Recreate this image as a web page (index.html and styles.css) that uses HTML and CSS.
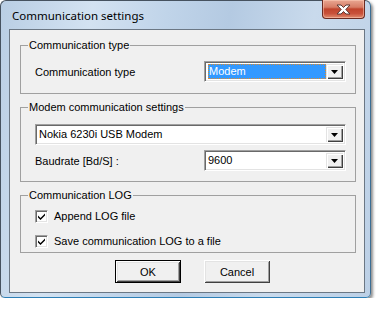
FILE: index.html
```html
<!DOCTYPE html>
<html lang="en">
<head>
  <meta charset="UTF-8" />
  <title>Communication settings</title>
  <link rel="stylesheet" href="styles.css">
</head>
<body>
  <div class="window">
    <div class="titlebar">
      <span class="title">Communication settings</span>
      <button class="close-btn" aria-label="Close">
        <svg width="15" height="11" viewBox="0 0 15 11">
          <path d="M1 1h4l2.5 2.5L10 1h4L9.8 5.5 14 10h-4L7.5 7.5 5 10H1l4.2-4.5z" fill="#fff" stroke="#5a3a36" stroke-width="1" stroke-linejoin="round"/>
        </svg>
      </button>
    </div>

    <div class="client">
      <div class="group group-type">
        <span class="legend">Communication type</span>
        <div class="row">
          <span class="label">Communication type</span>
          <div class="combo combo-short">
            <div class="combo-text"><span class="selected">Modem</span></div>
            <span class="combo-btn"><svg width="7" height="4" viewBox="0 0 7 4"><path d="M0 0h7L3.5 4z" fill="#000"/></svg></span>
          </div>
        </div>
      </div>

      <div class="group group-modem">
        <span class="legend">Modem communication settings</span>
        <div class="combo combo-wide">
          <div class="combo-text">Nokia 6230i USB Modem</div>
          <span class="combo-btn"><svg width="7" height="4" viewBox="0 0 7 4"><path d="M0 0h7L3.5 4z" fill="#000"/></svg></span>
        </div>
        <div class="row">
          <span class="label">Baudrate [Bd/S] :</span>
          <div class="combo combo-short">
            <div class="combo-text">9600</div>
            <span class="combo-btn"><svg width="7" height="4" viewBox="0 0 7 4"><path d="M0 0h7L3.5 4z" fill="#000"/></svg></span>
          </div>
        </div>
      </div>

      <div class="group group-log">
        <span class="legend">Communication LOG</span>
        <label class="check">
          <span class="check-box"><svg width="7" height="7" viewBox="0 0 7 7"><path d="M0 2.5l2.5 2.5L7 0.5v2L2.5 7 0 4.5z" fill="#000"/></svg></span>
          Append LOG file
        </label>
        <label class="check">
          <span class="check-box"><svg width="7" height="7" viewBox="0 0 7 7"><path d="M0 2.5l2.5 2.5L7 0.5v2L2.5 7 0 4.5z" fill="#000"/></svg></span>
          Save communication LOG to a file
        </label>
      </div>

      <div class="buttons">
        <button class="btn btn-default">OK</button>
        <button class="btn">Cancel</button>
      </div>
    </div>
  </div>
</body>
</html>
```

FILE: styles.css
```css
body {
  margin: 0;
  background: #fff;
}

.window {
  width: 371px;
  height: 298px;
  box-sizing: border-box;
  display: flex;
  flex-direction: column;
  padding: 0 5px 4px 8px;
  border: 1px solid #46525f;
  border-right-color: #3c6e94;
  border-bottom-color: #2d7fb6;
  border-radius: 6px 6px 5px 5px;
  background: linear-gradient(100deg, #b9cee4 0%, #d3e2f1 22%, #c0d4e9 40%, #b4cae2 55%, #c9daec 75%, #bcd0e6 100%);
  box-shadow: 2px 2px 3px rgba(0,0,0,0.45);
}

.titlebar {
  height: 28px;
  display: flex;
  justify-content: space-between;
  align-items: flex-start;
}

.title {
  font-family: "Noto Sans", "Open Sans", sans-serif;
  font-size: 11.5px;
  color: #000;
  padding: 7px 0 0 3px;
}

.close-btn {
  width: 43px;
  height: 19px;
  margin: -1px 0 0 0;
  padding: 0;
  display: flex;
  align-items: center;
  justify-content: center;
  border: 1px solid #6a2b22;
  border-top: none;
  border-radius: 0 0 4px 4px;
  background: linear-gradient(to bottom, #e9a792 0%, #d77d66 40%, #c0442c 50%, #c8513a 75%, #e08b6e 100%);
  box-shadow: inset 0 0 0 1px rgba(255,210,190,0.5);
}

.client {
  flex: 1;
  display: flex;
  flex-direction: column;
  padding-top: 15px;
  border: 1px solid #6b7784;
  background: #f0f0f0;
  font-family: "Liberation Sans", Arial, sans-serif;
  font-size: 11px;
  color: #000;
}

.group {
  position: relative;
  margin: 0 8px 13px 10px;
  border: 1px solid #a0a0a0;
  display: flex;
  flex-direction: column;
}

.legend {
  position: absolute;
  top: -7px;
  left: 7px;
  padding: 0 1px;
  line-height: 13px;
  background: #f0f0f0;
}

.group-type {
  height: 49px;
  box-sizing: border-box;
  padding: 15px 9px 0 14px;
}

.group-modem {
  height: 75px;
  box-sizing: border-box;
  padding: 16px 9px 0 14px;
  gap: 5px;
}

.group-log {
  height: 58px;
  box-sizing: border-box;
  padding: 14px 9px 0 14px;
  gap: 12px;
  margin-bottom: 7px;
}

.row {
  display: flex;
  justify-content: space-between;
  align-items: center;
}

.combo {
  height: 21px;
  box-sizing: border-box;
  display: flex;
  border: 1px solid;
  border-color: #a0a0a0 #fff #fff #a0a0a0;
  box-shadow: inset 1px 1px 0 #696969, inset -1px -1px 0 #e3e3e3;
  background: #fff;
  padding: 2px;
}

.combo-short {
  width: 142px;
}

.combo-wide {
  width: 311px;
}

.combo-text {
  flex: 1;
  display: flex;
  align-items: center;
  padding-left: 1px;
  line-height: 15px;
}

.selected {
  flex: 1;
  align-self: stretch;
  padding-left: 1px;
  color: #fff;
  background: #3399ff;
  outline: 1px dotted #e08a2a;
  outline-offset: -1px;
}

.combo-btn {
  width: 17px;
  display: flex;
  align-items: center;
  justify-content: center;
  background: #f0f0f0;
  box-shadow: inset 1px 1px 0 #e3e3e3, inset 2px 2px 0 #fff, inset -1px -1px 0 #404040, inset -2px -2px 0 #a0a0a0;
}

.check {
  display: flex;
  align-items: center;
  gap: 6px;
  line-height: 13px;
}

.check-box {
  width: 13px;
  height: 13px;
  box-sizing: border-box;
  display: flex;
  align-items: center;
  justify-content: center;
  border: 1px solid;
  border-color: #a0a0a0 #fff #fff #a0a0a0;
  box-shadow: inset 1px 1px 0 #696969, inset -1px -1px 0 #e3e3e3;
  background: #fff;
}

.buttons {
  display: flex;
  gap: 23px;
  padding-left: 105px;
}

.btn {
  width: 66px;
  height: 23px;
  padding: 0;
  border: none;
  background: #f0f0f0;
  font-family: "Liberation Sans", Arial, sans-serif;
  font-size: 11px;
  color: #000;
  box-shadow: inset 1px 1px 0 #fff, inset -1px -1px 0 #404040, inset 2px 2px 0 #e3e3e3, inset -2px -2px 0 #a0a0a0;
}

.btn-default {
  border: 1px solid #000;
  box-shadow: inset 1px 1px 0 #fff, inset -1px -1px 0 #404040, inset 2px 2px 0 #e3e3e3, inset -2px -2px 0 #a0a0a0;
}
```
